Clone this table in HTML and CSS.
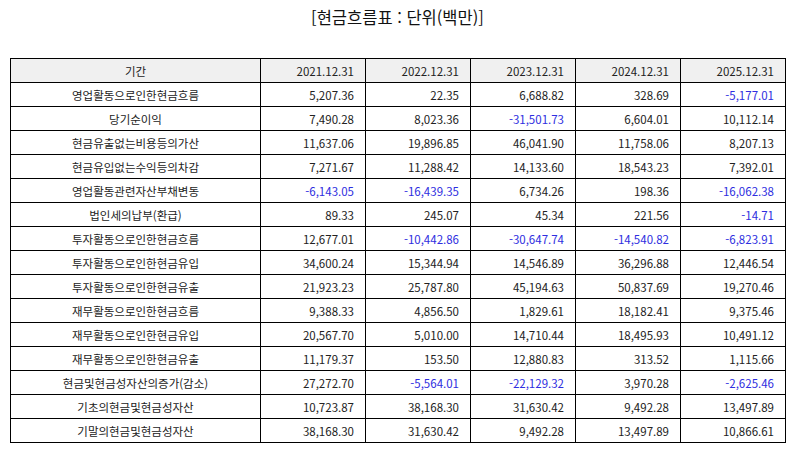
FILE: index.html
```html
<!DOCTYPE html>
<html lang="ko">
<head>
<meta charset="utf-8">
<title>현금흐름표</title>
<link rel="stylesheet" href="styles.css">
</head>
<body>
<h1 class="title">[현금흐름표 : 단위(백만)]</h1>
<table class="cf">
<thead>
<tr><th class="label">기간</th><th>2021.12.31</th><th>2022.12.31</th><th>2023.12.31</th><th>2024.12.31</th><th>2025.12.31</th></tr>
</thead>
<tbody>
<tr><td class="label">영업활동으로인한현금흐름</td><td>5,207.36</td><td>22.35</td><td>6,688.82</td><td>328.69</td><td class="neg">-5,177.01</td></tr>
<tr><td class="label">당기순이익</td><td>7,490.28</td><td>8,023.36</td><td class="neg">-31,501.73</td><td>6,604.01</td><td>10,112.14</td></tr>
<tr><td class="label">현금유출없는비용등의가산</td><td>11,637.06</td><td>19,896.85</td><td>46,041.90</td><td>11,758.06</td><td>8,207.13</td></tr>
<tr><td class="label">현금유입없는수익등의차감</td><td>7,271.67</td><td>11,288.42</td><td>14,133.60</td><td>18,543.23</td><td>7,392.01</td></tr>
<tr><td class="label">영업활동관련자산부채변동</td><td class="neg">-6,143.05</td><td class="neg">-16,439.35</td><td>6,734.26</td><td>198.36</td><td class="neg">-16,062.38</td></tr>
<tr><td class="label">법인세의납부(환급)</td><td>89.33</td><td>245.07</td><td>45.34</td><td>221.56</td><td class="neg">-14.71</td></tr>
<tr><td class="label">투자활동으로인한현금흐름</td><td>12,677.01</td><td class="neg">-10,442.86</td><td class="neg">-30,647.74</td><td class="neg">-14,540.82</td><td class="neg">-6,823.91</td></tr>
<tr><td class="label">투자활동으로인한현금유입</td><td>34,600.24</td><td>15,344.94</td><td>14,546.89</td><td>36,296.88</td><td>12,446.54</td></tr>
<tr><td class="label">투자활동으로인한현금유출</td><td>21,923.23</td><td>25,787.80</td><td>45,194.63</td><td>50,837.69</td><td>19,270.46</td></tr>
<tr><td class="label">재무활동으로인한현금흐름</td><td>9,388.33</td><td>4,856.50</td><td>1,829.61</td><td>18,182.41</td><td>9,375.46</td></tr>
<tr><td class="label">재무활동으로인한현금유입</td><td>20,567.70</td><td>5,010.00</td><td>14,710.44</td><td>18,495.93</td><td>10,491.12</td></tr>
<tr><td class="label">재무활동으로인한현금유출</td><td>11,179.37</td><td>153.50</td><td>12,880.83</td><td>313.52</td><td>1,115.66</td></tr>
<tr><td class="label">현금및현금성자산의증가(감소)</td><td>27,272.70</td><td class="neg">-5,564.01</td><td class="neg">-22,129.32</td><td>3,970.28</td><td class="neg">-2,625.46</td></tr>
<tr><td class="label">기초의현금및현금성자산</td><td>10,723.87</td><td>38,168.30</td><td>31,630.42</td><td>9,492.28</td><td>13,497.89</td></tr>
<tr><td class="label">기말의현금및현금성자산</td><td>38,168.30</td><td>31,630.42</td><td>9,492.28</td><td>13,497.89</td><td>10,866.61</td></tr>
</tbody>
</table>
</body>
</html>
```

FILE: styles.css
```css
html, body {
  margin: 0;
  padding: 0;
  background: #ffffff;
}
body {
  font-family: "Noto Sans CJK KR", "Noto Sans", sans-serif;
  color: #222;
  padding: 0 9px 0 10px;
}
.title {
  margin: 0;
  padding-top: 6px;
  height: 58px;
  box-sizing: border-box;
  text-align: center;
  font-size: 16.5px;
  font-weight: normal;
  line-height: 22px;
  color: #111;
}
.cf {
  border-collapse: collapse;
  width: 776px;
  table-layout: fixed;
  font-size: 11.5px;
}
.cf th, .cf td {
  border: 1px solid #000;
  height: 23px;
  padding: 0 11px 0 7px;
  text-align: right;
  font-weight: normal;
  line-height: 14px;
  color: #222;
  white-space: nowrap;
}
.cf th {
  background: #f0f0f0;
}
.cf .label {
  text-align: center;
  padding: 0 7px;
}
.cf th.label {
  width: 235px;
}
.cf td.neg {
  color: #2e2ee0;
}
```
